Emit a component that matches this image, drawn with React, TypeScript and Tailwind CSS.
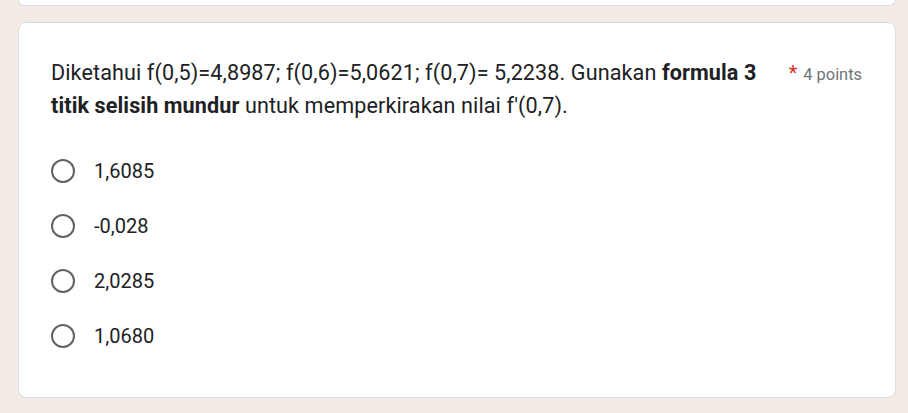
import React from 'react';

const options = ['1,6085', '-0,028', '2,0285', '1,0680'];

function Radio() {
  return <span className="block h-[24px] w-[24px] shrink-0 rounded-full border-[2px] border-[#5f6368]" />;
}

export default function App() {
  return (
    <div
      className="min-h-[413px] bg-[#f3ebe6] pl-[18px] pr-[12px] pb-[16px]"
      style={{ fontFamily: 'Roboto, "Noto Sans", sans-serif' }}
    >
      <div className="h-[6px] rounded-b-[8px] border border-t-0 border-[#dadce0] bg-white" />
      <div className="mt-[16px] h-[376px] rounded-[8px] border border-[#dadce0] bg-white pl-[32px] pr-[33px] pt-[33px]">
        <div className="flex items-start">
          <div className="flex-1 text-[21.6px] leading-[33px] tracking-[0.1px] text-[#202124]">
            Diketahui f(0,5)=4,8987; f(0,6)=5,0621; f(0,7)= 5,2238. Gunakan{' '}
            <b className="font-bold">formula 3 titik selisih mundur</b> untuk memperkirakan nilai f'(0,7).
          </div>
          <div className="ml-[16px] flex items-baseline pt-[2px] text-[16.4px] text-[#70757a]">
            <span className="mr-[6px] text-[20px] text-[#d93025]">*</span>
            <span>4 points</span>
          </div>
        </div>
        <div className="mt-[21px] flex flex-col">
          {options.map((o) => (
            <div key={o} className="flex h-[55px] items-center">
              <Radio />
              <span className="ml-[19px] text-[20px] text-[#202124]">{o}</span>
            </div>
          ))}
        </div>
      </div>
    </div>
  );
}
